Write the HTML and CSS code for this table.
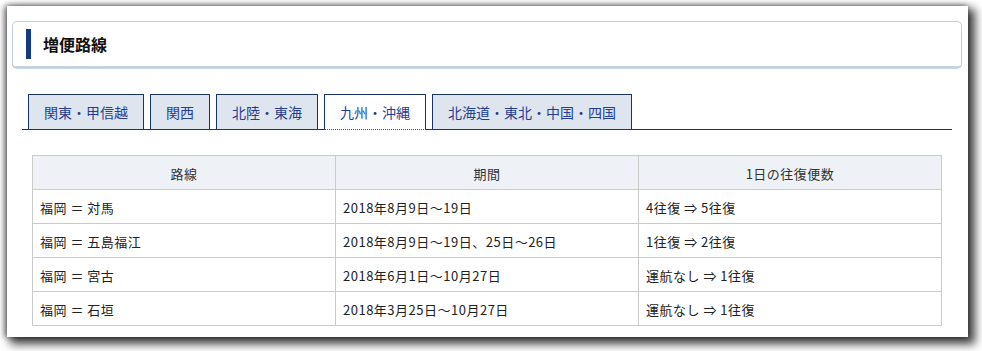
FILE: index.html
```html
<!DOCTYPE html>
<html lang="ja">

<head>
  <meta charset="UTF-8">
  <meta name="viewport" content="width=device-width, initial-scale=1.0">
  <title>増便路線</title>
  <link rel="stylesheet" href="styles.css">
</head>

<body>
  <div class="panel">
    <h2 class="heading"><span>増便路線</span></h2>

    <ul class="tabs">
      <li>関東・甲信越</li>
      <li>関西</li>
      <li>北陸・東海</li>
      <li class="active">九州・沖縄</li>
      <li>北海道・東北・中国・四国</li>
    </ul>

    <table class="routes">
      <thead>
        <tr>
          <th>路線</th>
          <th>期間</th>
          <th>1日の往復便数</th>
        </tr>
      </thead>
      <tbody>
        <tr>
          <td>福岡 ＝ 対馬</td>
          <td>2018年8月9日～19日</td>
          <td>4往復 ⇒ 5往復</td>
        </tr>
        <tr>
          <td>福岡 ＝ 五島福江</td>
          <td>2018年8月9日～19日、25日～26日</td>
          <td>1往復 ⇒ 2往復</td>
        </tr>
        <tr>
          <td>福岡 ＝ 宮古</td>
          <td>2018年6月1日～10月27日</td>
          <td>運航なし ⇒ 1往復</td>
        </tr>
        <tr>
          <td>福岡 ＝ 石垣</td>
          <td>2018年3月25日～10月27日</td>
          <td>運航なし ⇒ 1往復</td>
        </tr>
      </tbody>
    </table>
  </div>
</body>

</html>
```

FILE: styles.css
```css
* {
  padding: 0;
  margin: 0;
  box-sizing: border-box;
}

html,
body {
  height: 351px;
  overflow: hidden;
}

body {
  background: #fff;
  font-family: "Noto Sans CJK JP", "Noto Sans", sans-serif;
  color: #222;
  padding-top: 6px;
  padding-left: 7px;
}

li {
  list-style: none;
}

.panel {
  width: 961px;
  height: 331px;
  padding: 15px 0 0 5px;
  background: #fff;
  box-shadow: 5px 5px 9px 2px rgba(0, 0, 0, .75), -3px 0 6px rgba(0, 0, 0, .4), 0 -1px 5px rgba(0, 0, 0, .25);
}

/* section title with the navy bar */
.heading {
  display: flex;
  align-items: center;
  width: 950px;
  height: 48px;
  padding-left: 13px;
  border: 1px solid #c3ccd6;
  border-bottom: 3px solid #c5d3df;
  border-radius: 5px;
  font-size: 16px;
  font-weight: bold;
  color: #111;
}

.heading span {
  display: flex;
  align-items: center;
  height: 30px;
  padding-left: 12px;
  border-left: 5px solid #143a86;
}

/* region tabs */
.tabs {
  display: flex;
  gap: 6px;
  width: 930px;
  margin: 25px 0 0 10px;
  padding-left: 6px;
  border-bottom: 1px solid #16336a;
}

.tabs li {
  height: 36px;
  padding: 0 15px;
  margin-bottom: -1px;
  border: 1px solid #16336a;
  background: #dfe5ee;
  font-size: 14px;
  line-height: 34px;
  color: #253e93;
}

.tabs .active {
  background: #fff;
  border-bottom: 1px dotted #555;
}

/* route table */
.routes {
  width: 910px;
  margin: 25px 0 0 20px;
  border-collapse: collapse;
  table-layout: fixed;
  font-size: 13px;
  letter-spacing: .5px;
}

.routes th,
.routes td {
  height: 34px;
  border: 1px solid #cbcbcb;
  padding: 1px 7px 0;
  font-weight: normal;
}

.routes th {
  background: #eef2f7;
  text-align: center;
  color: #333;
}

.routes td {
  text-align: left;
}
```
